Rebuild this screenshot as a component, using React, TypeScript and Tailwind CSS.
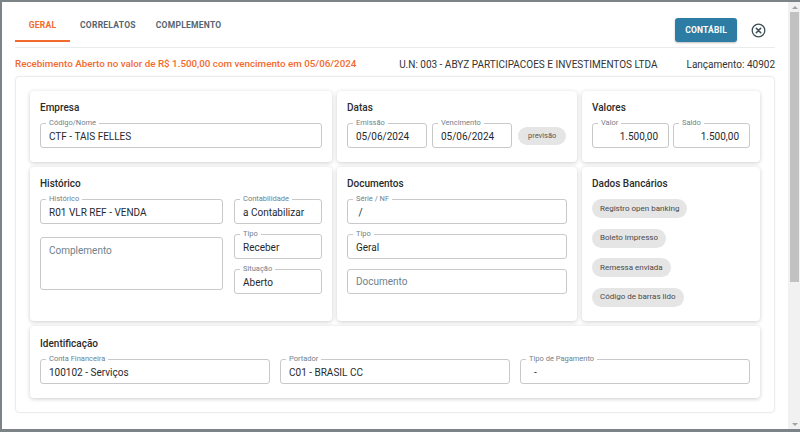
import type { ReactNode } from "react";

const FONT = { fontFamily: "Roboto, 'Noto Sans', Arial, sans-serif" };

function Field({
  label,
  value,
  right,
  className = "",
}: {
  label: string;
  value: string;
  right?: boolean;
  className?: string;
}) {
  return (
    <div
      className={`relative flex h-[25px] items-center rounded-[3px] border border-[#c9c9c9] px-[8px] ${className}`}
    >
      <span className="absolute -top-[6px] left-[5px] bg-white px-[3px] text-[7.5px] leading-[10px] text-[#6f828c]">
        {label}
      </span>
      <span
        className={`w-full pt-[1px] text-[10px] text-[#1f2a30] ${right ? "text-right pr-[2px]" : ""}`}
      >
        {value}
      </span>
    </div>
  );
}

function Placeholder({ text, className = "" }: { text: string; className?: string }) {
  return (
    <div
      className={`rounded-[3px] border border-[#c9c9c9] px-[8px] text-[10px] text-[#6f828c] ${className}`}
    >
      {text}
    </div>
  );
}

function Chip({ children }: { children: ReactNode }) {
  return (
    <span className="inline-flex h-[19px] items-center rounded-full bg-[#e5e5e5] px-[8px] text-[8px] text-[#4a4a4a]">
      {children}
    </span>
  );
}

function Card({
  title,
  children,
  className = "",
}: {
  title: string;
  children: ReactNode;
  className?: string;
}) {
  return (
    <div
      className={`rounded-[4px] bg-white px-[10px] pt-[10px] shadow-[0_1px_4px_rgba(0,0,0,0.2)] ${className}`}
    >
      <div className="mb-[9px] text-[10px] font-medium leading-[13px] text-[#2b2b2b]">
        {title}
      </div>
      {children}
    </div>
  );
}

export default function App() {
  return (
    <div
      style={FONT}
      className="flex h-[432px] w-[800px] bg-[#7d8488] pt-[2px] pl-[2px] pb-[3px]"
    >
      <div className="flex flex-1 bg-white">
        <div className="flex flex-1 flex-col pl-[13px] pr-[13px]">
          {/* tabs */}
          <div className="flex items-start justify-between">
            <div className="flex h-[40px] items-stretch">
              {[
                { t: "GERAL", on: true },
                { t: "CORRELATOS", on: false },
                { t: "COMPLEMENTO", on: false },
              ].map((tab) => (
                <div
                  key={tab.t}
                  className={`flex min-w-[55px] items-center justify-center border-b-[2px] px-[10px] pt-[8px] text-[8.5px] font-bold tracking-[0.03em] ${
                    tab.on
                      ? "border-[#f26a2e] text-[#f26a2e]"
                      : "border-transparent text-[#55656f]"
                  }`}
                >
                  {tab.t}
                </div>
              ))}
            </div>
            <div className="flex items-center gap-[14px] pt-[16px]">
              <button className="h-[24px] rounded-[3px] bg-[#2c7ca3] px-[10px] text-[8.5px] font-bold tracking-[0.02em] text-white shadow-[0_1px_2px_rgba(0,0,0,0.25)]">
                CONTÁBIL
              </button>
              <svg width="15" height="15" viewBox="0 0 15 15" className="mr-[9px]">
                <circle cx="7.5" cy="7.5" r="6.3" fill="none" stroke="#3c4e58" strokeWidth="1.3" />
                <path
                  d="M5.3 5.3 L9.7 9.7 M9.7 5.3 L5.3 9.7"
                  stroke="#3c4e58"
                  strokeWidth="1.6"
                  strokeLinecap="round"
                />
              </svg>
            </div>
          </div>
          <div className="mt-[5px] h-[1px] bg-[#ebebeb]" />

          {/* info row */}
          <div className="flex h-[28px] items-center pt-[4px] text-[10px]">
            <span className="flex-1 text-[9.8px] font-medium text-[#f26a2e]">
              Recebimento Aberto no valor de R$ 1.500,00 com vencimento em 05/06/2024
            </span>
            <span className="text-[#333]">
              U.N: 003 - ABYZ PARTICIPACOES E INVESTIMENTOS LTDA
            </span>
            <span className="ml-[29px] text-[#333]">Lançamento: 40902</span>
          </div>

          {/* main box */}
          <div className="rounded-[4px] border border-[#ececec] p-[14px] shadow-[0_0_2px_rgba(0,0,0,0.05)]">
            <div className="grid grid-cols-[302px_240px_178px] grid-rows-[71px_154px_72px] gap-x-[5px] gap-y-[5px]">
              <Card title="Empresa">
                <Field label="Código/Nome" value="CTF - TAIS FELLES" />
              </Card>

              <Card title="Datas">
                <div className="flex items-center gap-[5px]">
                  <Field label="Emissão" value="05/06/2024" className="w-[80px]" />
                  <Field label="Vencimento" value="05/06/2024" className="w-[80px]" />
                  <span className="ml-[1px] inline-flex h-[18px] items-center rounded-full bg-[#e5e5e5] px-[10px] text-[7.5px] text-[#555]">
                    previsão
                  </span>
                </div>
              </Card>

              <Card title="Valores">
                <div className="flex gap-[4px]">
                  <Field label="Valor" value="1.500,00" right className="w-[78px]" />
                  <Field label="Saldo" value="1.500,00" right className="w-[78px]" />
                </div>
              </Card>

              <Card title="Histórico">
                <div className="flex gap-[11px]">
                  <div className="flex w-[183px] flex-col gap-[13px]">
                    <Field label="Histórico" value="R01 VLR REF - VENDA" />
                    <Placeholder text="Complemento" className="h-[53px] pt-[5px]" />
                  </div>
                  <div className="flex flex-1 flex-col gap-[10px]">
                    <Field label="Contabilidade" value="a Contabilizar" />
                    <Field label="Tipo" value="Receber" />
                    <Field label="Situação" value="Aberto" />
                  </div>
                </div>
              </Card>

              <Card title="Documentos">
                <div className="flex flex-col gap-[10px]">
                  <Field label="Série / NF" value=" /" className="w-[220px] whitespace-pre" />
                  <Field label="Tipo" value="Geral" className="w-[220px]" />
                  <Placeholder
                    text="Documento"
                    className="flex h-[25px] w-[220px] items-center"
                  />
                </div>
              </Card>

              <Card title="Dados Bancários">
                <div className="mt-[1px] flex flex-col items-start gap-[10.5px]">
                  <Chip>Registro open banking</Chip>
                  <Chip>Boleto impresso</Chip>
                  <Chip>Remessa enviada</Chip>
                  <Chip>Código de barras lido</Chip>
                </div>
              </Card>

              <Card title="Identificação" className="col-span-3 pt-[11px]">
                <div className="grid grid-cols-3 gap-[10px]">
                  <Field label="Conta Financeira" value="100102 - Serviços" />
                  <Field label="Portador" value="C01 - BRASIL CC" />
                  <Field label="Tipo de Pagamento" value="  -" className="whitespace-pre" />
                </div>
              </Card>
            </div>
          </div>
        </div>

        {/* scrollbar */}
        <div className="flex w-[13px] flex-col items-center bg-[#f1f1f1]">
          <div className="flex h-[10px] items-center justify-center">
            <div className="h-0 w-0 border-x-[3px] border-b-[3px] border-x-transparent border-b-[#a3a3a3]" />
          </div>
          <div className="h-[270px] w-[9px] bg-[#c1c1c1]" />
          <div className="flex-1" />
          <div className="flex h-[10px] items-center justify-center">
            <div className="h-0 w-0 border-x-[3px] border-t-[3px] border-x-transparent border-t-[#a3a3a3]" />
          </div>
        </div>
      </div>
    </div>
  );
}
